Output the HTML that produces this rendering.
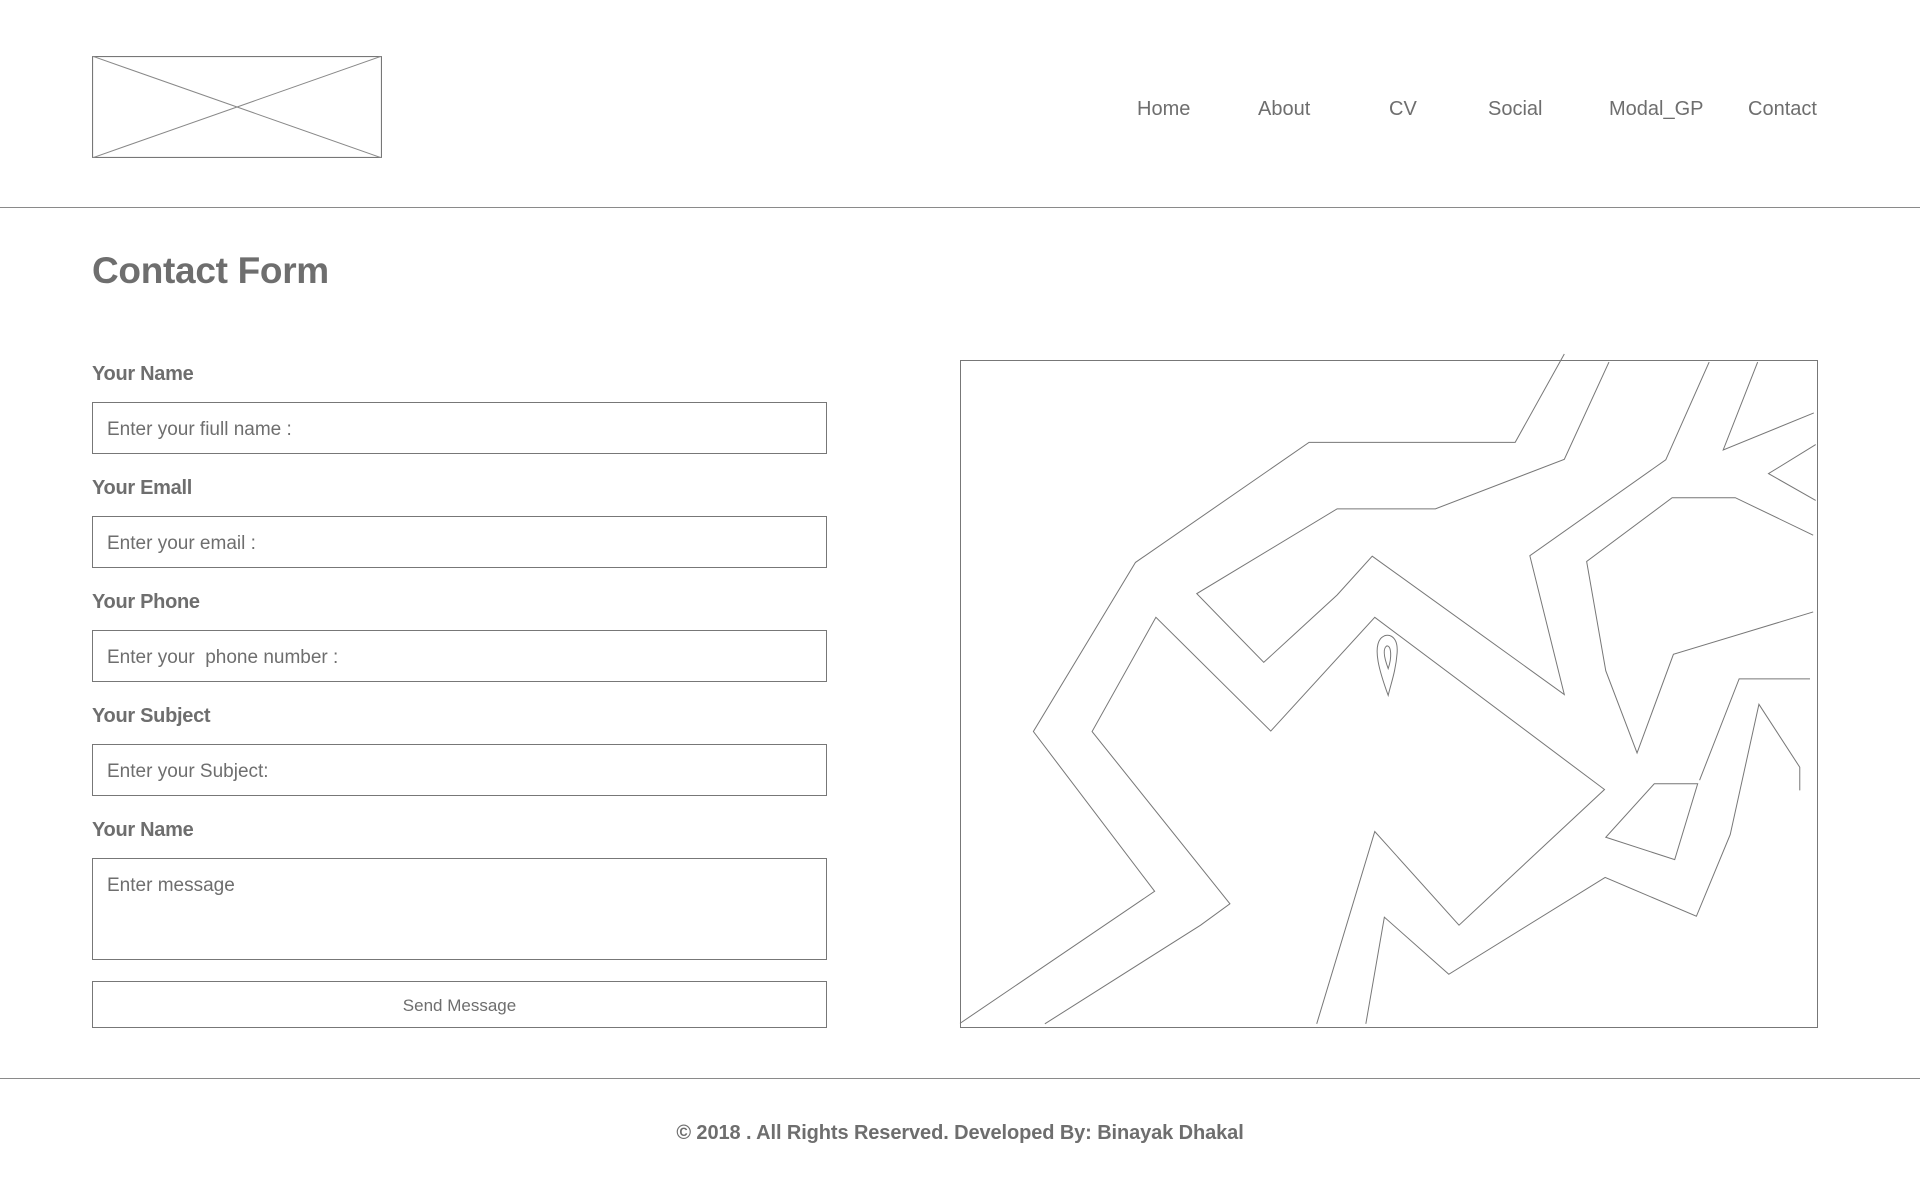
<!DOCTYPE html>
<html><head><meta charset="utf-8"><style>
*{margin:0;padding:0;box-sizing:border-box}
body{width:1920px;height:1187px;background:#fff;position:relative;overflow:hidden;font-family:"Liberation Sans",Arial,sans-serif;color:#6e6e6e}
.a{position:absolute}
.nav{top:98px;font-size:20px}
.hr{left:0;width:1920px;height:1px;background:#8a8a8a}
.lbl{left:92px;font-size:20px;font-weight:bold;letter-spacing:-0.3px}
.inp{left:92px;width:735px;border:1.5px solid #777;font-size:19px;padding-left:14px}
</style></head><body>
<svg class="a" style="left:92px;top:56px" width="290" height="102" viewBox="0 0 290 102">
<rect x="0.5" y="0.5" width="289" height="101" fill="none" stroke="#777" stroke-width="1.2"/>
<line x1="0" y1="0" x2="290" y2="102" stroke="#888" stroke-width="1"/>
<line x1="0" y1="102" x2="290" y2="0" stroke="#888" stroke-width="1"/>
</svg>
<div class="a nav" style="left:1137px">Home</div>
<div class="a nav" style="left:1258px">About</div>
<div class="a nav" style="left:1389px">CV</div>
<div class="a nav" style="left:1488px">Social</div>
<div class="a nav" style="left:1609px">Modal_GP</div>
<div class="a nav" style="left:1748px">Contact</div>
<div class="a hr" style="top:207px"></div>
<div class="a" style="left:92px;top:250px;font-size:37px;font-weight:bold;letter-spacing:-0.3px">Contact Form</div>

<div class="a lbl" style="top:363px">Your Name</div>
<div class="a inp" style="top:402px;height:52px;line-height:53px">Enter your fiull name :</div>
<div class="a lbl" style="top:477px">Your Emall</div>
<div class="a inp" style="top:516px;height:52px;line-height:53px">Enter your email :</div>
<div class="a lbl" style="top:591px">Your Phone</div>
<div class="a inp" style="top:630px;height:52px;line-height:53px">Enter your &nbsp;phone number :</div>
<div class="a lbl" style="top:705px">Your Subject</div>
<div class="a inp" style="top:744px;height:52px;line-height:53px">Enter your Subject:</div>
<div class="a lbl" style="top:819px">Your Name</div>
<div class="a inp" style="top:858px;height:102px;padding-top:16px">Enter message</div>
<div class="a inp" style="top:981px;height:47px;line-height:48px;text-align:center;padding:0;font-size:17px">Send Message</div>

<div class="a" style="left:960px;top:360px;width:858px;height:668px;border:1.3px solid #777"></div>
<svg class="a" style="left:960px;top:360px;overflow:visible" width="857" height="668" viewBox="95 43.4 1343 1497" preserveAspectRatio="none">
<g fill="none" stroke="#777" stroke-width="1">
<polyline vector-effect="non-scaling-stroke" points="1042,30 965,228 642,228 370,497 210,876 400,1234 95,1530"/>
<polyline vector-effect="non-scaling-stroke" points="1112,48 1042,266 840,377 686,377 466,567 571,721 686,570 741,483 1042,793 988,482 1201,267 1269,48"/>
<polyline vector-effect="non-scaling-stroke" points="1345,48 1291,245 1433,162"/>
<polyline vector-effect="non-scaling-stroke" points="1436,233 1362,298 1436,358"/>
<polyline vector-effect="non-scaling-stroke" points="1432,436 1310,352 1211,352 1077,495 1107,740 1156,924 1213,703 1432,608"/>
<polyline vector-effect="non-scaling-stroke" points="228,1531 472,1310 518,1262 302,876 402,620 582,875 745,620 1105,1006 877,1310 745,1100 654,1531"/>
<polyline vector-effect="non-scaling-stroke" points="731,1531 760,1292 861,1420 1106,1203 1249,1290 1302,1107 1347,815 1411,956 1411,1008"/>
<polyline vector-effect="non-scaling-stroke" points="1254,985 1316,758 1427,758"/>
<polygon vector-effect="non-scaling-stroke" points="1183,993 1251,993 1215,1163 1107,1113"/>
<path vector-effect="non-scaling-stroke" d="M766,795 C752,740 742,690 754,668 C764,652 782,660 780,700 C778,740 770,770 766,795 Z"/>
<path vector-effect="non-scaling-stroke" d="M766,735 C760,712 757,690 764,684 C771,684 772,710 766,735 Z"/>
</g>
</svg>

<div class="a hr" style="top:1078px"></div>
<div class="a" style="left:0;width:1920px;top:1122px;text-align:center;font-size:20px;font-weight:bold;letter-spacing:-0.1px">© 2018 . All Rights Reserved. Developed By: Binayak Dhakal</div>
</body></html>
